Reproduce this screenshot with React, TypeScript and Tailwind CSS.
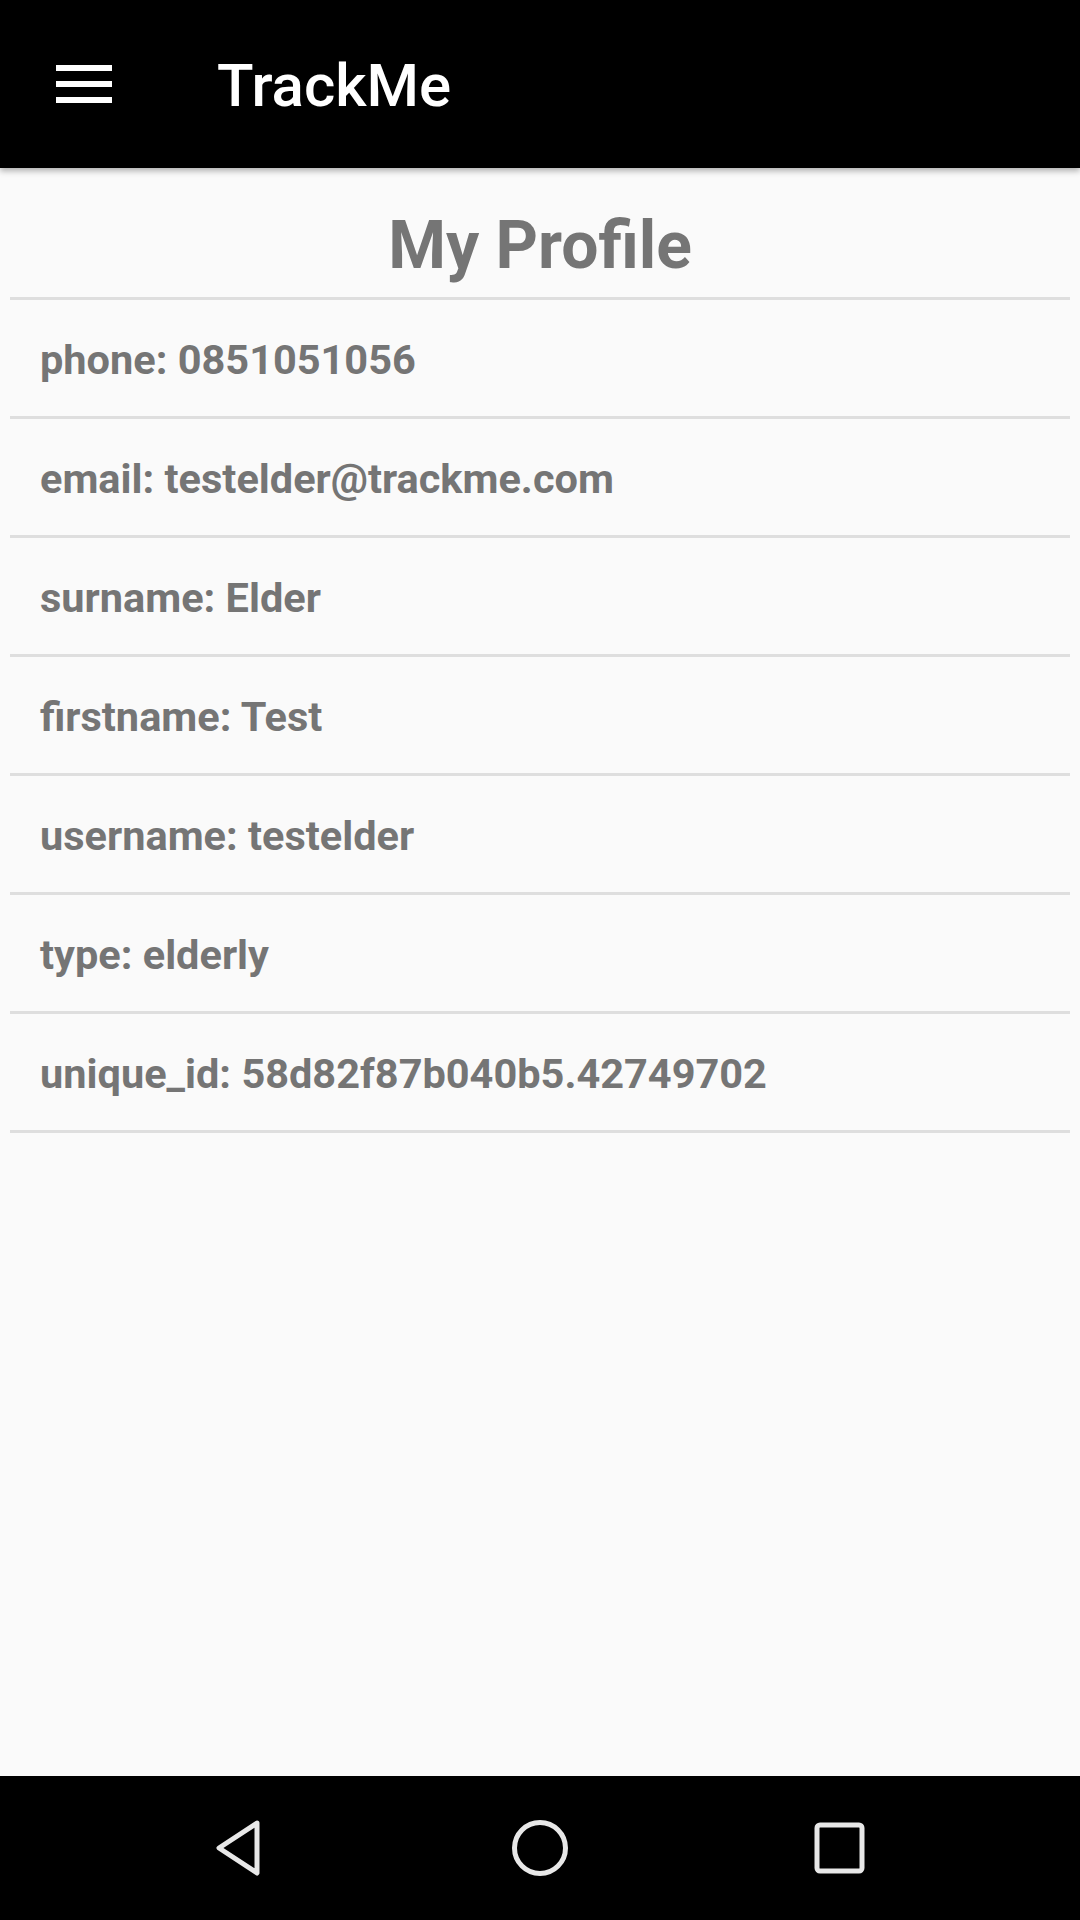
import React from "react";

const fields = [
  { label: "phone", value: "0851051056" },
  { label: "email", value: "testelder@trackme.com" },
  { label: "surname", value: "Elder" },
  { label: "firstname", value: "Test" },
  { label: "username", value: "testelder" },
  { label: "type", value: "elderly" },
  { label: "unique_id", value: "58d82f87b040b5.42749702" },
];

function MenuIcon() {
  return (
    <div className="flex flex-col gap-[10px] w-[56px]">
      <span className="block h-[6px] bg-white" />
      <span className="block h-[6px] bg-white" />
      <span className="block h-[6px] bg-white" />
    </div>
  );
}

function NavBar() {
  return (
    <div className="h-[144px] bg-black flex items-center justify-center">
      <div className="w-[300px] flex justify-center">
        <svg width="56" height="60" viewBox="0 0 56 60" fill="none">
          <path d="M45 5 L7 30 L45 55 Z" stroke="#e8e8e8" strokeWidth="5" strokeLinejoin="round" />
        </svg>
      </div>
      <div className="w-[300px] flex justify-center">
        <svg width="60" height="60" viewBox="0 0 60 60" fill="none">
          <circle cx="30" cy="30" r="25.5" stroke="#e8e8e8" strokeWidth="5" />
        </svg>
      </div>
      <div className="w-[300px] flex justify-center">
        <svg width="56" height="56" viewBox="0 0 56 56" fill="none">
          <rect x="5" y="5" width="45" height="46" rx="3" stroke="#e8e8e8" strokeWidth="5" />
        </svg>
      </div>
    </div>
  );
}

export default function App() {
  return (
    <div className="w-[1080px] h-[1920px] flex flex-col bg-[#fafafa] font-['Roboto',sans-serif]">
      {/* Toolbar */}
      <header className="h-[168px] bg-black flex items-center shrink-0 shadow-[0_3px_6px_rgba(0,0,0,0.3)] relative z-10">
        <div className="pl-[56px] pr-[105px]">
          <MenuIcon />
        </div>
        <h1 className="text-white text-[60px] font-medium leading-none mt-[4px]">TrackMe</h1>
      </header>

      {/* Content */}
      <main className="flex-1 flex flex-col">
        <div className="h-[129px] flex justify-center pt-[45px]">
          <h2 className="text-[#757575] text-[66px] font-bold leading-none">My Profile</h2>
        </div>
        <ul className="mx-[10px] border-t-[3px] border-[#dedede]">
          {fields.map((f) => (
            <li
              key={f.label}
              className="h-[119px] flex items-center px-[30px] pt-[5px] border-b-[3px] border-[#dedede] text-[#757575] text-[41.5px] font-bold"
            >
              {f.label}: {f.value}
            </li>
          ))}
        </ul>
      </main>

      <NavBar />
    </div>
  );
}
